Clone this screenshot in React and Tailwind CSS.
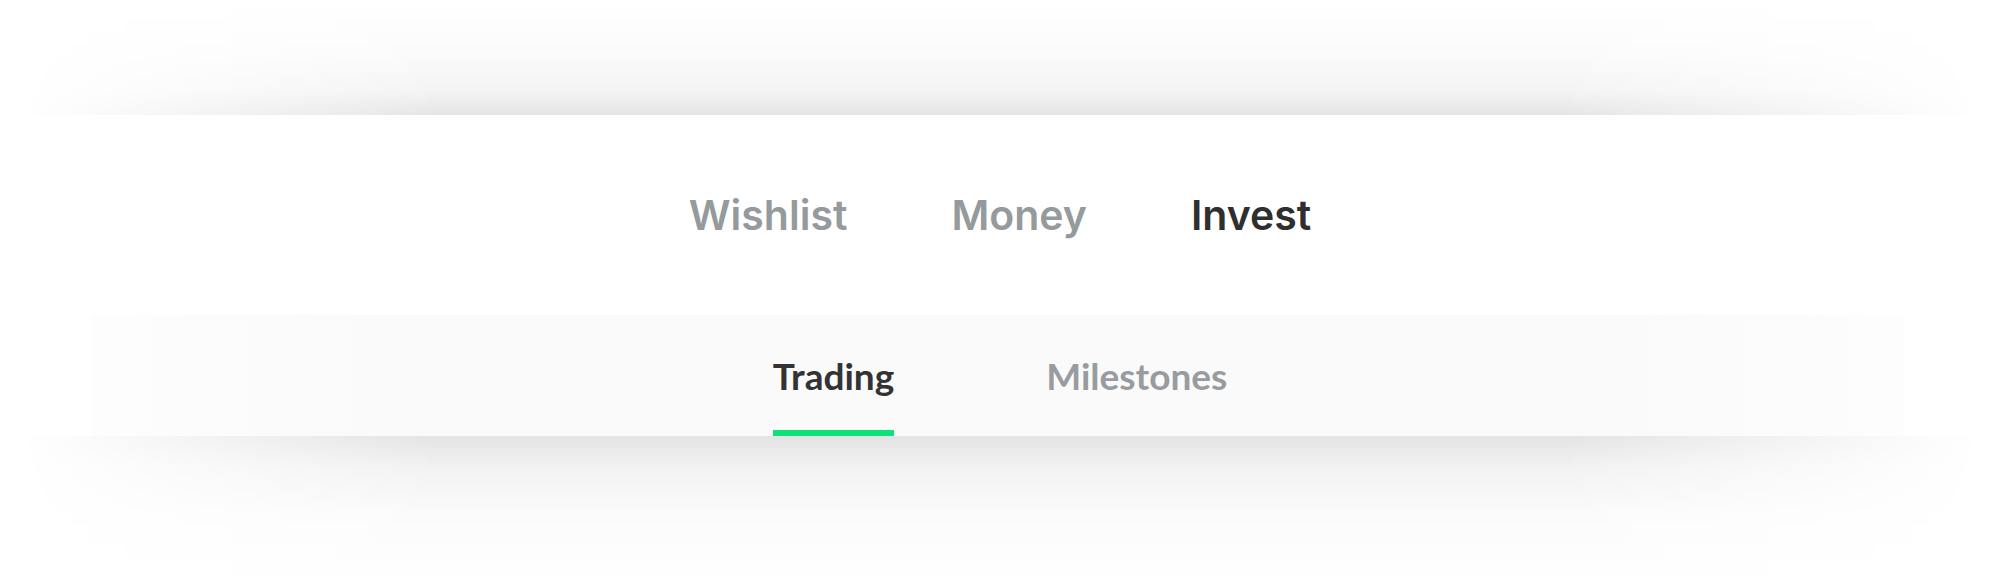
import { useState } from 'react';

const mainTabs = ['Wishlist', 'Money', 'Invest'];
const subTabs = ['Trading', 'Milestones'];

export default function App() {
  const [tab, setTab] = useState('Invest');
  const [sub, setSub] = useState('Trading');

  return (
    <div className="min-h-[583px] bg-white overflow-hidden">
      {/* ── Shadow above the header ── */}
      <div className="h-[115px] bg-[linear-gradient(to_top,rgba(0,0,0,0.1),rgba(0,0,0,0.045)_22%,rgba(0,0,0,0.015)_55%,transparent)] [mask-image:linear-gradient(to_right,transparent_1%,black_22%,black_78%,transparent_99%)]" />

      {/* ── Main tabs ── */}
      <nav className="h-[200px] flex items-center justify-center gap-[104px] bg-white font-['Inter',sans-serif]">
        {mainTabs.map(t => (
          <button
            key={t}
            onClick={() => setTab(t)}
            className={`text-[41px] leading-none font-semibold ${
              tab === t ? 'text-[#2f2f2f]' : 'text-[#959a9d]'
            }`}
          >
            {t}
          </button>
        ))}
      </nav>

      {/* ── Sub tabs ── */}
      <div className="h-[121px] flex justify-center gap-[152px] bg-[linear-gradient(to_right,#fff_4.5%,#fdfdfd_4.6%,#fafafa_18%,#fafafa_82%,#fdfdfd_95.2%,#fff_95.3%)] font-['Lato',sans-serif]">
        {subTabs.map(t => (
          <button key={t} onClick={() => setSub(t)} className="flex flex-col h-full">
            <span
              className={`flex-1 flex items-center pt-[6px] text-[37px] leading-none font-bold ${
                sub === t ? 'text-[#333333]' : 'text-[#989c9f]'
              }`}
            >
              {t}
            </span>
            <span className={`h-[6px] w-full ${sub === t ? 'bg-[#0ee07a]' : 'bg-transparent'}`} />
          </button>
        ))}
      </div>

      {/* ── Shadow below the header ── */}
      <div className="h-[147px] bg-[linear-gradient(to_bottom,rgba(0,0,0,0.11),rgba(0,0,0,0.05)_22%,rgba(0,0,0,0.015)_55%,transparent)] [mask-image:linear-gradient(to_right,transparent_1%,black_22%,black_78%,transparent_99%)]" />
    </div>
  );
}
